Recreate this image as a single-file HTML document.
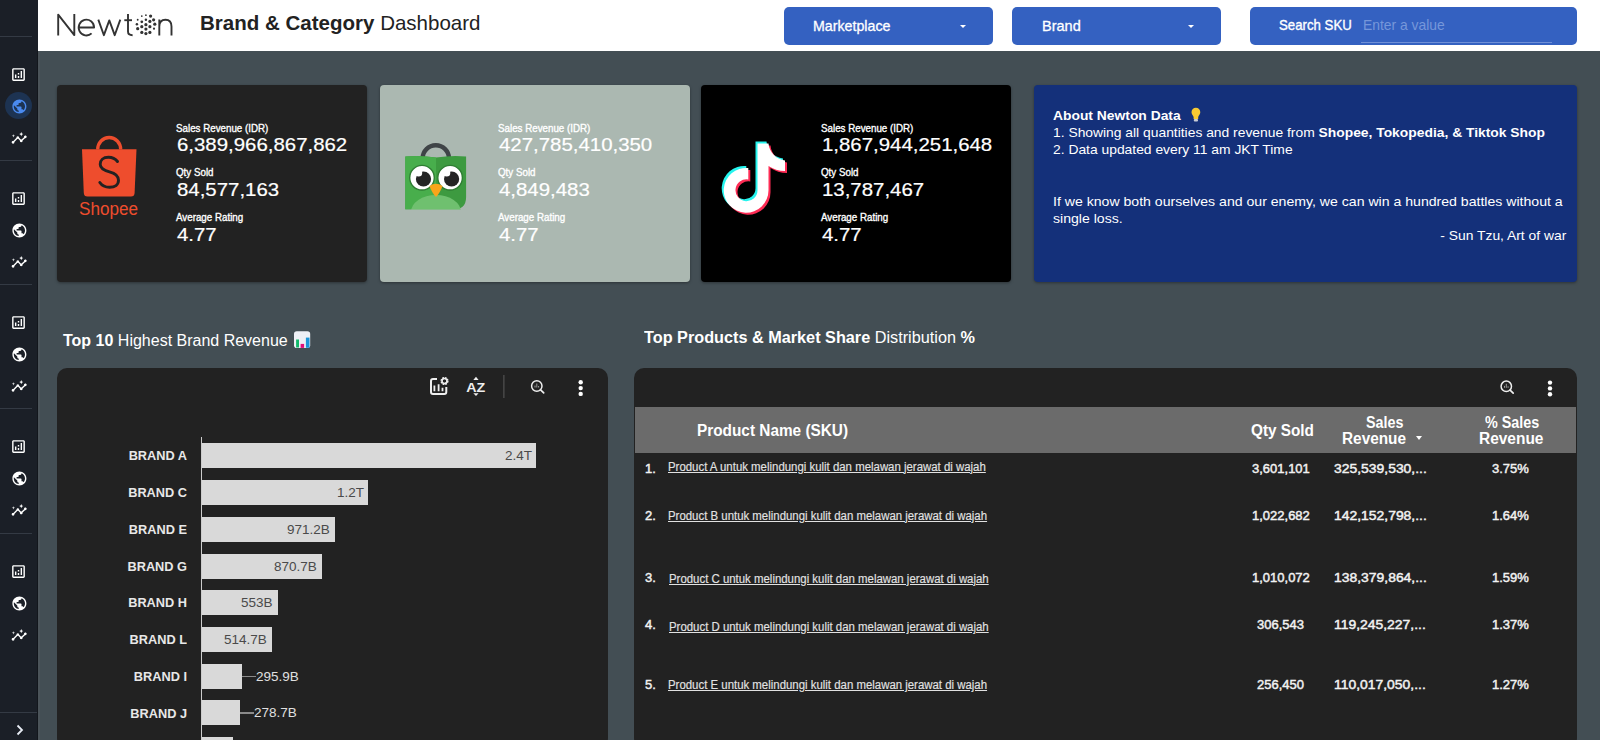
<!DOCTYPE html>
<html><head><meta charset="utf-8">
<style>
*{margin:0;padding:0;box-sizing:border-box}
html,body{width:1600px;height:740px;overflow:hidden;background:#434e54;font-family:"Liberation Sans",sans-serif;position:relative}
.a{position:absolute}
.t{position:absolute;line-height:1;white-space:nowrap}
.b{font-weight:bold}
#side{left:0;top:0;width:38px;height:740px;background:#1b1f27}
.hr{position:absolute;left:0;width:32px;height:1px;background:#343a44}
#hdr{left:38px;top:0;width:1562px;height:51px;background:#fff}
.dd{position:absolute;background:#3461c1;border-radius:5px;height:38px;top:7px}
.card{position:absolute;top:85px;height:197px;width:310px;border-radius:4px;box-shadow:0 1px 3px rgba(0,0,0,.35)}
.lbl{font-size:10.5px;color:#fff;-webkit-text-stroke:.35px #fff;transform:scaleX(.931);transform-origin:left top}
.val{font-size:19px;color:#fff;-webkit-text-stroke:.2px #fff;transform:scaleX(1.074);transform-origin:left top}
.panel{position:absolute;top:368px;height:380px;background:#222;border-radius:10px}
.bl{font-size:13.5px;color:#e8e8e8;font-weight:bold;text-align:right;width:120px;transform:scaleX(.945);transform-origin:right top}
.bar{position:absolute;left:202px;height:25px;background:#d9d9d9}
.bv{font-size:13.5px;color:#4a4a4a}
.bvo{font-size:13.5px;color:#e0e0e0}
.num{font-size:13px;color:#f2f2f2;-webkit-text-stroke:.45px #f2f2f2}
.rv{transform:scaleX(1.07);transform-origin:left top}
.pl{font-size:12.3px;color:#e2e2e2;-webkit-text-stroke:.15px #e2e2e2;text-decoration:underline;transform:scaleX(.928);transform-origin:left top}
.ab{font-size:13px;color:#fff;transform:scaleX(1.065);transform-origin:left top}
</style></head><body>
<div id="side" class="a">
  <div class="hr" style="top:36px"></div>
  <div class="hr" style="top:160px"></div>
  <div class="hr" style="top:284px"></div>
  <div class="hr" style="top:408px"></div>
  <div class="hr" style="top:533px"></div>
  <div class="a" style="left:0;top:712px;width:38px;height:1px;background:#343a44"></div>
<svg class="a" style="left:10px;top:66px" width="17" height="17" viewBox="0 0 24 24"><path fill="#fff" d="M19 3H5c-1.1 0-2 .9-2 2v14c0 1.1.9 2 2 2h14c1.1 0 2-.9 2-2V5c0-1.1-.9-2-2-2zm0 16H5V5h14v14zM7 12h2v5H7zm8-5h2v10h-2zm-4 7h2v3h-2zm0-4h2v2h-2z"/></svg>
<div class="a" style="left:5px;top:92px;width:27px;height:27px;border-radius:50%;background:#1d3352"></div>
<svg class="a" style="left:10.6px;top:97.9px" width="16.8" height="16.8" viewBox="0 0 24 24"><path fill="#4a8af0" d="M12 2C6.48 2 2 6.48 2 12s4.48 10 10 10 10-4.48 10-10S17.52 2 12 2zm-1 17.93c-3.950-.49-7-3.85-7-7.93 0-.62.08-1.21.21-1.79L9 15v1c0 1.1.9 2 2 2v1.930zm6.9-2.54c-.26-.81-1-1.39-1.9-1.39h-1v-3c0-.55-.45-1-1-1H8v-2h2c.55 0 1-.45 1-1V7h2c1.1 0 2-.9 2-2v-.41c2.93 1.19 5 4.06 5 7.41 0 2.080-.8 3.97-2.1 5.39z"/></svg>
<svg class="a" style="left:10.9px;top:130.4px" width="16.4" height="16.4" viewBox="0 0 24 24"><path fill="#fff" d="M21 8c-1.45 0-2.26 1.44-1.93 2.51l-3.55 3.56c-.3-.09-.74-.09-1.04 0l-2.550-2.55C12.27 10.45 11.46 9 10 9c-1.45 0-2.27 1.44-1.93 2.52l-4.56 4.55C2.44 15.74 1 16.55 1 18c0 1.1.9 2 2 2 1.45 0 2.26-1.44 1.93-2.51l4.55-4.56c.3.09.74.09 1.04 0l2.55 2.55C12.73 16.61 13.54 18 15 18c1.45 0 2.27-1.44 1.93-2.52l3.56-3.55c1.07.33 2.51-.48 2.51-1.93 0-1.1-.9-2-2-2z"/><path fill="#fff" d="M15 9l.94-2.07L18 6l-2.06-.93L15 3l-.92 2.07L12 6l2.08.93zM3.5 11L4 9l2-.5L4 8l-.5-2L3 8l-2 .5L3 9z"/></svg>
<svg class="a" style="left:10px;top:190px" width="17" height="17" viewBox="0 0 24 24"><path fill="#fff" d="M19 3H5c-1.1 0-2 .9-2 2v14c0 1.1.9 2 2 2h14c1.1 0 2-.9 2-2V5c0-1.1-.9-2-2-2zm0 16H5V5h14v14zM7 12h2v5H7zm8-5h2v10h-2zm-4 7h2v3h-2zm0-4h2v2h-2z"/></svg>
<svg class="a" style="left:10.6px;top:221.9px" width="16.8" height="16.8" viewBox="0 0 24 24"><path fill="#fff" d="M12 2C6.48 2 2 6.48 2 12s4.48 10 10 10 10-4.48 10-10S17.52 2 12 2zm-1 17.93c-3.950-.49-7-3.85-7-7.93 0-.62.08-1.21.21-1.79L9 15v1c0 1.1.9 2 2 2v1.930zm6.9-2.54c-.26-.81-1-1.39-1.9-1.39h-1v-3c0-.55-.45-1-1-1H8v-2h2c.55 0 1-.45 1-1V7h2c1.1 0 2-.9 2-2v-.41c2.93 1.19 5 4.06 5 7.41 0 2.080-.8 3.97-2.1 5.39z"/></svg>
<svg class="a" style="left:10.9px;top:254.4px" width="16.4" height="16.4" viewBox="0 0 24 24"><path fill="#fff" d="M21 8c-1.45 0-2.26 1.44-1.93 2.51l-3.55 3.56c-.3-.09-.74-.09-1.04 0l-2.550-2.55C12.27 10.45 11.46 9 10 9c-1.45 0-2.27 1.44-1.93 2.52l-4.56 4.55C2.44 15.74 1 16.55 1 18c0 1.1.9 2 2 2 1.45 0 2.26-1.44 1.93-2.51l4.55-4.56c.3.09.74.09 1.04 0l2.55 2.55C12.73 16.61 13.54 18 15 18c1.45 0 2.27-1.44 1.93-2.52l3.56-3.55c1.07.33 2.51-.48 2.51-1.93 0-1.1-.9-2-2-2z"/><path fill="#fff" d="M15 9l.94-2.07L18 6l-2.06-.93L15 3l-.92 2.07L12 6l2.08.93zM3.5 11L4 9l2-.5L4 8l-.5-2L3 8l-2 .5L3 9z"/></svg>
<svg class="a" style="left:10px;top:314px" width="17" height="17" viewBox="0 0 24 24"><path fill="#fff" d="M19 3H5c-1.1 0-2 .9-2 2v14c0 1.1.9 2 2 2h14c1.1 0 2-.9 2-2V5c0-1.1-.9-2-2-2zm0 16H5V5h14v14zM7 12h2v5H7zm8-5h2v10h-2zm-4 7h2v3h-2zm0-4h2v2h-2z"/></svg>
<svg class="a" style="left:10.6px;top:345.9px" width="16.8" height="16.8" viewBox="0 0 24 24"><path fill="#fff" d="M12 2C6.48 2 2 6.48 2 12s4.48 10 10 10 10-4.48 10-10S17.52 2 12 2zm-1 17.93c-3.950-.49-7-3.85-7-7.93 0-.62.08-1.21.21-1.79L9 15v1c0 1.1.9 2 2 2v1.930zm6.9-2.54c-.26-.81-1-1.39-1.9-1.39h-1v-3c0-.55-.45-1-1-1H8v-2h2c.55 0 1-.45 1-1V7h2c1.1 0 2-.9 2-2v-.41c2.93 1.19 5 4.06 5 7.41 0 2.080-.8 3.97-2.1 5.39z"/></svg>
<svg class="a" style="left:10.9px;top:378.4px" width="16.4" height="16.4" viewBox="0 0 24 24"><path fill="#fff" d="M21 8c-1.45 0-2.26 1.44-1.93 2.51l-3.55 3.56c-.3-.09-.74-.09-1.04 0l-2.550-2.55C12.27 10.45 11.46 9 10 9c-1.45 0-2.27 1.44-1.93 2.52l-4.56 4.55C2.44 15.74 1 16.55 1 18c0 1.1.9 2 2 2 1.45 0 2.26-1.44 1.93-2.51l4.55-4.56c.3.09.74.09 1.04 0l2.55 2.55C12.73 16.61 13.54 18 15 18c1.45 0 2.27-1.44 1.93-2.52l3.56-3.55c1.07.33 2.51-.48 2.51-1.93 0-1.1-.9-2-2-2z"/><path fill="#fff" d="M15 9l.94-2.07L18 6l-2.06-.93L15 3l-.92 2.07L12 6l2.08.93zM3.5 11L4 9l2-.5L4 8l-.5-2L3 8l-2 .5L3 9z"/></svg>
<svg class="a" style="left:10px;top:438px" width="17" height="17" viewBox="0 0 24 24"><path fill="#fff" d="M19 3H5c-1.1 0-2 .9-2 2v14c0 1.1.9 2 2 2h14c1.1 0 2-.9 2-2V5c0-1.1-.9-2-2-2zm0 16H5V5h14v14zM7 12h2v5H7zm8-5h2v10h-2zm-4 7h2v3h-2zm0-4h2v2h-2z"/></svg>
<svg class="a" style="left:10.6px;top:469.9px" width="16.8" height="16.8" viewBox="0 0 24 24"><path fill="#fff" d="M12 2C6.48 2 2 6.48 2 12s4.48 10 10 10 10-4.48 10-10S17.52 2 12 2zm-1 17.93c-3.950-.49-7-3.85-7-7.93 0-.62.08-1.21.21-1.79L9 15v1c0 1.1.9 2 2 2v1.930zm6.9-2.54c-.26-.81-1-1.39-1.9-1.39h-1v-3c0-.55-.45-1-1-1H8v-2h2c.55 0 1-.45 1-1V7h2c1.1 0 2-.9 2-2v-.41c2.93 1.19 5 4.06 5 7.41 0 2.080-.8 3.97-2.1 5.39z"/></svg>
<svg class="a" style="left:10.9px;top:502.4px" width="16.4" height="16.4" viewBox="0 0 24 24"><path fill="#fff" d="M21 8c-1.45 0-2.26 1.44-1.93 2.51l-3.55 3.56c-.3-.09-.74-.09-1.04 0l-2.550-2.55C12.27 10.45 11.46 9 10 9c-1.45 0-2.27 1.44-1.93 2.52l-4.56 4.55C2.44 15.74 1 16.55 1 18c0 1.1.9 2 2 2 1.45 0 2.26-1.44 1.93-2.51l4.55-4.56c.3.09.74.09 1.04 0l2.55 2.55C12.73 16.61 13.54 18 15 18c1.45 0 2.27-1.44 1.93-2.52l3.56-3.55c1.07.33 2.51-.48 2.51-1.93 0-1.1-.9-2-2-2z"/><path fill="#fff" d="M15 9l.94-2.07L18 6l-2.06-.93L15 3l-.92 2.07L12 6l2.08.93zM3.5 11L4 9l2-.5L4 8l-.5-2L3 8l-2 .5L3 9z"/></svg>
<svg class="a" style="left:10px;top:563px" width="17" height="17" viewBox="0 0 24 24"><path fill="#fff" d="M19 3H5c-1.1 0-2 .9-2 2v14c0 1.1.9 2 2 2h14c1.1 0 2-.9 2-2V5c0-1.1-.9-2-2-2zm0 16H5V5h14v14zM7 12h2v5H7zm8-5h2v10h-2zm-4 7h2v3h-2zm0-4h2v2h-2z"/></svg>
<svg class="a" style="left:10.6px;top:594.9px" width="16.8" height="16.8" viewBox="0 0 24 24"><path fill="#fff" d="M12 2C6.48 2 2 6.48 2 12s4.48 10 10 10 10-4.48 10-10S17.52 2 12 2zm-1 17.93c-3.950-.49-7-3.85-7-7.93 0-.62.08-1.21.21-1.79L9 15v1c0 1.1.9 2 2 2v1.930zm6.9-2.54c-.26-.81-1-1.39-1.9-1.39h-1v-3c0-.55-.45-1-1-1H8v-2h2c.55 0 1-.45 1-1V7h2c1.1 0 2-.9 2-2v-.41c2.93 1.19 5 4.06 5 7.41 0 2.080-.8 3.97-2.1 5.39z"/></svg>
<svg class="a" style="left:10.9px;top:627.4px" width="16.4" height="16.4" viewBox="0 0 24 24"><path fill="#fff" d="M21 8c-1.45 0-2.26 1.44-1.93 2.51l-3.55 3.56c-.3-.09-.74-.09-1.04 0l-2.550-2.55C12.27 10.45 11.46 9 10 9c-1.45 0-2.27 1.44-1.93 2.52l-4.56 4.55C2.44 15.74 1 16.55 1 18c0 1.1.9 2 2 2 1.45 0 2.26-1.44 1.93-2.51l4.55-4.56c.3.09.74.09 1.04 0l2.55 2.55C12.73 16.61 13.54 18 15 18c1.45 0 2.27-1.44 1.93-2.52l3.56-3.55c1.07.33 2.51-.48 2.51-1.93 0-1.1-.9-2-2-2z"/><path fill="#fff" d="M15 9l.94-2.07L18 6l-2.06-.93L15 3l-.92 2.07L12 6l2.08.93zM3.5 11L4 9l2-.5L4 8l-.5-2L3 8l-2 .5L3 9z"/></svg>
<svg class="a" style="left:14px;top:724px" width="12" height="12" viewBox="0 0 12 12"><path d="M3.5 1.5L8 6l-4.5 4.5" fill="none" stroke="#e8ecf5" stroke-width="1.8"/></svg>
</div>
<div class="a" style="left:37px;top:51px;width:1px;height:689px;background:#13161c"></div>
<div class="a" style="left:38px;top:51px;width:2px;height:689px;background:#4b5359"></div>
<div id="hdr" class="a"></div>
<svg class="a" style="left:50px;top:8px" width="130" height="36" viewBox="50 8 130 36">
<g fill="none" stroke="#333" stroke-width="1.9" stroke-linejoin="round" stroke-linecap="butt">
<path d="M58.2,35.6V14.6L74.3,35.1V14.1"/>
<path d="M78.9,27.5H94.1A7.7,7.9 0 1 0 91.6,33.4"/>
<path d="M98.3,19.6L103.9,35.2L109.3,20.4L114.7,35.2L120.3,19.6"/>
<path d="M128,14.1V31.5Q128,35.2 132.6,35.2"/><path d="M124.3,20.2H132"/>
<path d="M159.3,35.6V19.4M159.3,26.5Q159.3,19.7 165.5,19.7Q171.5,19.7 171.5,26.5V35.6"/>
</g><g fill="#333"><circle cx="141.8" cy="16.1" r="0.86"/><circle cx="145.9" cy="15.15" r="0.86"/><circle cx="150.6" cy="16.1" r="1.60"/><circle cx="137.7" cy="19.8" r="0.94"/><circle cx="145.9" cy="19.8" r="1.25"/><circle cx="153.6" cy="19.8" r="1.60"/><circle cx="141.8" cy="21.8" r="1.40"/><circle cx="149.9" cy="21.4" r="1.60"/><circle cx="136.9" cy="24.2" r="1.25"/><circle cx="145.9" cy="24.7" r="1.60"/><circle cx="154.8" cy="24.2" r="1.60"/><circle cx="141.8" cy="26.7" r="1.60"/><circle cx="149.9" cy="26.7" r="1.60"/><circle cx="137.7" cy="28.7" r="1.60"/><circle cx="145.9" cy="29.1" r="1.60"/><circle cx="154" cy="28.7" r="1.1"/><circle cx="141.8" cy="32.4" r="1.60"/><circle cx="149.9" cy="32.4" r="1.60"/><circle cx="145.9" cy="33.6" r="1.60"/></g></svg>
<div class="t b" style="transform:scaleX(0.977);transform-origin:left top;left:200px;top:12.2px;font-size:21px;color:#222">Brand &amp; Category <span style="font-weight:normal">Dashboard</span></div>
<div class="dd" style="left:784px;width:209px"></div>
<div class="t" style="left:813px;top:19.2px;font-size:14.5px;color:#fff;-webkit-text-stroke:.3px #fff;transform:scaleX(.98);transform-origin:left top">Marketplace</div>
<div class="a" style="left:960px;top:24.5px;width:0;height:0;border-left:3px solid transparent;border-right:3px solid transparent;border-top:3.5px solid #fff"></div>
<div class="dd" style="left:1012px;width:209px"></div>
<div class="t" style="left:1042px;top:19.2px;font-size:14.5px;color:#fff;-webkit-text-stroke:.3px #fff">Brand</div>
<div class="a" style="left:1188px;top:24.5px;width:0;height:0;border-left:3px solid transparent;border-right:3px solid transparent;border-top:3.5px solid #fff"></div>
<div class="dd" style="left:1250px;width:327px"></div>
<div class="t" style="left:1279px;top:18.2px;font-size:14.5px;color:#fff;-webkit-text-stroke:.35px #fff;transform:scaleX(.912);transform-origin:left top">Search SKU</div>
<div class="t" style="transform:scaleX(0.956);transform-origin:left top;left:1363px;top:17.7px;font-size:14.5px;color:#7697da">Enter a value</div>
<div class="a" style="left:1361px;top:42px;width:191px;height:1px;background:#6f8fd6"></div>

<div class="card" style="left:57px;background:#222"></div>
<div class="card" style="left:380px;background:#abb8b1"></div>
<div class="card" style="left:701px;background:#000"></div>
<div class="card" style="left:1034px;width:543px;background:#14307a"></div>
<svg class="a" style="left:70px;top:125px" width="80" height="100" viewBox="70 125 80 100">
<path d="M97.7,149.5A11.5,12 0 0 1 120.7,149.5" fill="none" stroke="#ee4d2d" stroke-width="3.3"/>
<path fill="#ee4d2d" d="M82,149.3H136.5L134.6,193Q134.4,196.6 131,196.6H87.5Q84,196.6 83.8,193Z"/>
<path fill="none" stroke="#222" stroke-width="2.9" stroke-linecap="round" d="M117.5,161.5C115,158.3 111.5,157.3 108.5,157.3C103,157.3 100.2,160.5 100.2,164.2C100.2,168.5 104,170.3 109.5,171.8C115.5,173.3 118.5,176 118.5,180.3C118.5,184.8 114.8,187.3 109.6,187.3C105.2,187.3 101.8,185.5 99.8,182.5"/>
<text x="79" y="215" font-family="Liberation Sans" font-size="17.5" fill="#ee4d2d" textLength="59" lengthAdjust="spacingAndGlyphs">Shopee</text>
</svg>
<svg class="a" style="left:395px;top:135px" width="80" height="80" viewBox="395 135 80 80">
<path d="M422.6,158.5A13.2,13.2 0 0 1 449,158.5" fill="none" stroke="#3f4447" stroke-width="4.4"/>
<path fill="#3d9a40" d="M405.3,156.5Q420,155 436,157.5Q452,155 466.1,156.5V197Q466.1,209.6 453,209.6H405.3Z"/>
<path fill="#48ae4c" d="M405.3,156.5Q420,155 436,157.5V209.6H405.3Z"/>
<ellipse cx="436" cy="212" rx="25" ry="17" fill="#6fc06f"/>
<rect x="405" y="209.6" width="62" height="6" fill="#abb8b1"/>
<circle cx="422" cy="177.7" r="12.3" fill="#fff" stroke="#2f7d33" stroke-width="1.4"/>
<circle cx="450.1" cy="177.7" r="12.3" fill="#fff" stroke="#2f7d33" stroke-width="1.4"/>
<circle cx="423.5" cy="179" r="7.6" fill="#242424"/><circle cx="451.6" cy="179" r="7.6" fill="#242424"/>
<circle cx="418.6" cy="173" r="3.6" fill="#fff"/><circle cx="446.7" cy="173" r="3.6" fill="#fff"/>
<path fill="#f9a51a" d="M429.5,186Q436,181.5 442.5,186Q440,193 436,197Q432,193 429.5,186Z"/>
</svg>
<svg class="a" style="left:715px;top:135px" width="80" height="90" viewBox="715 135 80 90">
<path fill="#25f4ee" transform="translate(-2,-2)" d="M757.5,143.5H768.5C769.2,152 776,159.5 785,160.5V171C779,171 773,169 768.5,166V190.3A22.4,22.4 0 1 1 748.3,168V179.4A11,11 0 1 0 757.5,190.3Z"/>
<path fill="#fe2c55" transform="translate(2,2)" d="M757.5,143.5H768.5C769.2,152 776,159.5 785,160.5V171C779,171 773,169 768.5,166V190.3A22.4,22.4 0 1 1 748.3,168V179.4A11,11 0 1 0 757.5,190.3Z"/>
<path fill="#fff" d="M757.5,143.5H768.5C769.2,152 776,159.5 785,160.5V171C779,171 773,169 768.5,166V190.3A22.4,22.4 0 1 1 748.3,168V179.4A11,11 0 1 0 757.5,190.3Z"/>
</svg>

<div class="t lbl" style="left:176px;top:122.5px">Sales Revenue (IDR)</div>
<div class="t val" style="left:177px;top:135.1px">6,389,966,867,862</div>
<div class="t lbl" style="left:176px;top:167.3px">Qty Sold</div>
<div class="t val" style="left:177px;top:179.6px">84,577,163</div>
<div class="t lbl" style="left:176px;top:211.8px">Average Rating</div>
<div class="t val" style="left:177px;top:224.5px">4.77</div>

<div class="t lbl" style="left:498px;top:122.5px">Sales Revenue (IDR)</div>
<div class="t val" style="left:499px;top:135.1px">427,785,410,350</div>
<div class="t lbl" style="left:498px;top:167.3px">Qty Sold</div>
<div class="t val" style="left:499px;top:179.6px">4,849,483</div>
<div class="t lbl" style="left:498px;top:211.8px">Average Rating</div>
<div class="t val" style="left:499px;top:224.5px">4.77</div>

<div class="t lbl" style="left:821px;top:122.5px">Sales Revenue (IDR)</div>
<div class="t val" style="left:822px;top:135.1px">1,867,944,251,648</div>
<div class="t lbl" style="left:821px;top:167.3px">Qty Sold</div>
<div class="t val" style="left:822px;top:179.6px">13,787,467</div>
<div class="t lbl" style="left:821px;top:211.8px">Average Rating</div>
<div class="t val" style="left:822px;top:224.5px">4.77</div>

<div class="t ab b" style="left:1053px;top:108.7px">About Newton Data</div>
<svg class="a" style="left:1190px;top:107px" width="12" height="16" viewBox="1190 107 12 16">
<path fill="#f7c933" d="M1195.9,107.8C1193.4,107.8 1191.5,109.8 1191.5,112.2C1191.5,114.2 1193,115.3 1193.6,117V119H1198.2V117C1198.8,115.3 1200.3,114.2 1200.3,112.2C1200.3,109.8 1198.4,107.8 1195.9,107.8Z"/>
<rect x="1193.8" y="119" width="4.2" height="2.6" rx="1" fill="#c8cbd6"/></svg>
<div class="t ab" style="left:1053px;top:126px">1. Showing all quantities and revenue from <b>Shopee, Tokopedia, &amp; Tiktok Shop</b></div>
<div class="t ab" style="left:1053px;top:143px">2. Data updated every 11 am JKT Time</div>
<div class="t ab" style="left:1053px;top:195px;transform:scaleX(1.084)">If we know both ourselves and our enemy, we can win a hundred battles without a</div>
<div class="t ab" style="left:1053px;top:211.5px;transform:scaleX(1.084)">single loss.</div>
<div class="t ab" style="right:34px;top:229px;transform-origin:right top">- Sun Tzu, Art of war</div>

<div class="t b" style="left:63px;top:332.8px;font-size:16px;color:#fff">Top 10 <span style="font-weight:normal">Highest Brand Revenue</span></div>
<svg class="a" style="left:293px;top:330px" width="19" height="19" viewBox="293 330 19 19">
<rect x="294" y="331.2" width="16.2" height="16.8" rx="2.8" fill="#eef0f6"/>
<rect x="296.1" y="339.5" width="2.9" height="8" fill="#10b86a"/>
<rect x="300.6" y="343.9" width="3.5" height="4" fill="#e0107a"/>
<rect x="305.9" y="337.6" width="3.6" height="10.2" fill="#1a95d8"/></svg>
<div class="t b" style="left:644px;top:329.8px;font-size:16px;color:#fff;transform:scaleX(1.015);transform-origin:left top">Top Products &amp; Market Share <span style="font-weight:normal">Distribution</span> %</div>

<div class="panel" style="left:57px;width:551px"></div>
<div class="panel" style="left:634px;width:943px"></div>
<svg class="a" style="left:425px;top:372px" width="165" height="30" viewBox="425 372 165 30">
<g fill="none" stroke="#eee" stroke-width="2">
<path d="M437,379H433Q431,379 431,381V392Q431,394 433,394H444.3Q446.3,394 446.3,392V387"/>
<path d="M434.4,385.6V391.3M438.6,384.3V391.3M442.5,387.7V391.3" stroke-width="1.8"/>
</g>
<circle cx="444.5" cy="381" r="3" fill="none" stroke="#eee" stroke-width="2.2" stroke-dasharray="1.6 0.75"/>
<circle cx="444.5" cy="381" r="2.5" fill="none" stroke="#eee" stroke-width="1.4"/>
<text x="466.3" y="391.6" font-family="Liberation Sans" font-weight="bold" font-size="13.4" fill="#eee" textLength="19" lengthAdjust="spacingAndGlyphs">AZ</text>
<path fill="#eee" d="M473.3,379.9L476,376.8L478.6,379.9ZM473.3,393.2L476,396L478.6,393.2Z"/>
<rect x="503.2" y="375" width="1.3" height="23" fill="#4e4e4e"/>
<circle cx="536.8" cy="386" r="5.2" fill="none" stroke="#eee" stroke-width="1.5"/>
<path d="M540.6,389.8L543.7,392.9" stroke="#eee" stroke-width="1.7" stroke-linecap="round"/>
<path d="M535,387.5V385.6M536.8,387.5V383.5M538.6,387.5V386" stroke="#999" stroke-width="1"/>
<circle cx="580.7" cy="382.3" r="2.2" fill="#fff"/><circle cx="580.7" cy="388.1" r="2.2" fill="#fff"/><circle cx="580.7" cy="393.9" r="2.2" fill="#fff"/>
</svg>
<svg class="a" style="left:1495px;top:375px" width="65" height="25" viewBox="1495 375 65 25">
<circle cx="1506.3" cy="386.3" r="5.2" fill="none" stroke="#eee" stroke-width="1.5"/>
<path d="M1510.1,390.1L1513.2,393.2" stroke="#eee" stroke-width="1.7" stroke-linecap="round"/>
<path d="M1504.5,387.8V385.9M1506.3,387.8V383.8M1508.1,387.8V386.3" stroke="#999" stroke-width="1"/>
<circle cx="1550" cy="382.6" r="2.2" fill="#fff"/><circle cx="1550" cy="388.4" r="2.2" fill="#fff"/><circle cx="1550" cy="394.2" r="2.2" fill="#fff"/>
</svg>

<div class="a" style="left:201px;top:437px;width:1px;height:303px;background:#ccc"></div>
<div class="bar" style="top:443px;width:334px"></div>
<div class="bar" style="top:480px;width:166px"></div>
<div class="bar" style="top:517px;width:133px"></div>
<div class="bar" style="top:554px;width:120px"></div>
<div class="bar" style="top:590px;width:76px"></div>
<div class="bar" style="top:627px;width:70px"></div>
<div class="bar" style="top:664px;width:40px"></div>
<div class="bar" style="top:700px;width:38px"></div>
<div class="bar" style="top:737px;width:31px"></div>

<div class="t bl" style="left:67px;top:448.8px">BRAND A</div>
<div class="t bl" style="left:67px;top:485.7px">BRAND C</div>
<div class="t bl" style="left:67px;top:522.6px">BRAND E</div>
<div class="t bl" style="left:67px;top:559.5px">BRAND G</div>
<div class="t bl" style="left:67px;top:596.4px">BRAND H</div>
<div class="t bl" style="left:67px;top:633.3px">BRAND L</div>
<div class="t bl" style="left:67px;top:670.2px">BRAND I</div>
<div class="t bl" style="left:67px;top:707.1px">BRAND J</div>

<div class="t bv" style="left:505px;top:449px">2.4T</div>
<div class="t bv" style="left:337px;top:486px">1.2T</div>
<div class="t bv" style="left:287px;top:523px">971.2B</div>
<div class="t bv" style="left:274px;top:560px">870.7B</div>
<div class="t bv" style="left:241px;top:596px">553B</div>
<div class="t bv" style="left:224px;top:633px">514.7B</div>
<div class="a" style="left:242px;top:675.5px;width:14px;height:1.6px;background:#8a8a8a"></div>
<div class="t bvo" style="left:256px;top:670px">295.9B</div>
<div class="a" style="left:240px;top:712px;width:14px;height:1.6px;background:#8a8a8a"></div>
<div class="t bvo" style="left:254px;top:706px">278.7B</div>

<div class="a" style="left:635px;top:407px;width:941px;height:46px;background:#6b6b6b"></div>
<div class="a" style="left:1416px;top:436px;width:0;height:0;border-left:3.2px solid transparent;border-right:3.2px solid transparent;border-top:4px solid #fff"></div>
<div class="t b" style="transform:scaleX(0.96);transform-origin:left top;left:697px;top:423.4px;font-size:16px;color:#fff">Product Name (SKU)</div>
<div class="t b" style="transform:scaleX(0.957);transform-origin:left top;left:1251px;top:423px;font-size:16px;color:#fff">Qty Sold</div>
<div class="t b" style="transform:scaleX(0.895);transform-origin:left top;left:1366px;top:415.4px;font-size:16px;color:#fff">Sales</div>
<div class="t b" style="left:1342px;top:430.5px;font-size:16px;color:#fff;transform:scaleX(.96);transform-origin:left top">Revenue</div>
<div class="t b" style="transform:scaleX(0.897);transform-origin:left top;left:1485px;top:415.4px;font-size:16px;color:#fff">% Sales</div>
<div class="t b" style="left:1479px;top:430.5px;font-size:16px;color:#fff;transform:scaleX(.966);transform-origin:left top">Revenue</div>

<div class="t num" style="left:645px;top:461.8px">1.</div>
<div class="t num" style="left:645px;top:508.6px">2.</div>
<div class="t num" style="left:645px;top:570.8px">3.</div>
<div class="t num" style="left:645px;top:617.5px">4.</div>
<div class="t num" style="left:645px;top:678px">5.</div>
<div class="t pl" style="left:668px;top:460.6px">Product A untuk melindungi kulit dan melawan jerawat di wajah</div>
<div class="t pl" style="left:668px;top:509.6px">Product B untuk melindungi kulit dan melawan jerawat di wajah</div>
<div class="t pl" style="left:669px;top:572.6px">Product C untuk melindungi kulit dan melawan jerawat di wajah</div>
<div class="t pl" style="left:669px;top:621.2px">Product D untuk melindungi kulit dan melawan jerawat di wajah</div>
<div class="t pl" style="left:668px;top:679px">Product E untuk melindungi kulit dan melawan jerawat di wajah</div>

<div class="t num" style="left:1252px;top:461.5px">3,601,101</div>
<div class="t num rv" style="left:1334px;top:461.5px">325,539,530,...</div>
<div class="t num" style="left:1492px;top:461.5px">3.75%</div>
<div class="t num" style="left:1252px;top:509px">1,022,682</div>
<div class="t num rv" style="left:1334px;top:509px">142,152,798,...</div>
<div class="t num" style="left:1492px;top:509px">1.64%</div>
<div class="t num" style="left:1252px;top:571px">1,010,072</div>
<div class="t num rv" style="left:1334px;top:571px">138,379,864,...</div>
<div class="t num" style="left:1492px;top:571px">1.59%</div>
<div class="t num" style="left:1257px;top:617.5px">306,543</div>
<div class="t num rv" style="left:1334px;top:617.5px">119,245,227,...</div>
<div class="t num" style="left:1492px;top:617.5px">1.37%</div>
<div class="t num" style="left:1257px;top:678px">256,450</div>
<div class="t num rv" style="left:1334px;top:678px">110,017,050,...</div>
<div class="t num" style="left:1492px;top:678px">1.27%</div>
</body></html>
